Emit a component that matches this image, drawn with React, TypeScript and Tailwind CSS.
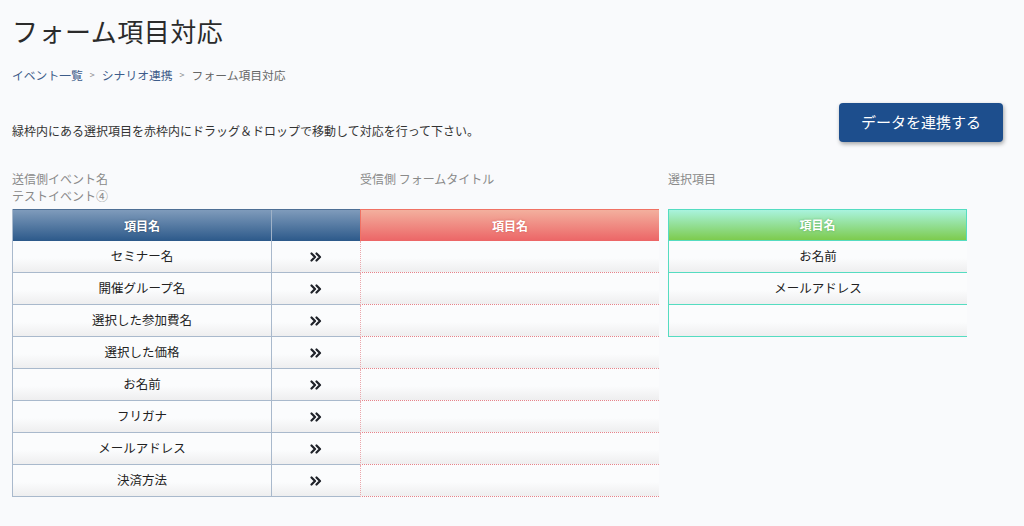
const sourceItems = [
  'セミナー名',
  '開催グループ名',
  '選択した参加費名',
  '選択した価格',
  'お名前',
  'フリガナ',
  'メールアドレス',
  '決済方法',
];

const choices = ['お名前', 'メールアドレス', ''];

const rowBg = 'bg-[linear-gradient(to_bottom,#fbfcfd_55%,#eeeeef)]';

function Chevrons() {
  return (
    <svg width="12" height="10" viewBox="0 0 12 10" fill="none" stroke="#1f2229" strokeWidth="2.2" strokeLinecap="round" strokeLinejoin="round">
      <path d="M1.5 1.5l3.5 3.5-3.5 3.5" />
      <path d="M6.5 1.5l3.5 3.5-3.5 3.5" />
    </svg>
  );
}

export default function App() {
  return (
    <div className="min-h-[526px] w-[1024px] bg-[#f9fafc] px-3 text-[#333] [font-family:'Noto_Sans_CJK_JP','Noto_Sans',sans-serif]">
      {/* Title + breadcrumb */}
      <h1 className="pt-[11px] text-[26px] leading-[40px] font-normal tracking-[0.5px] text-[#2b2b2b]">フォーム項目対応</h1>
      <nav className="mt-[16px] flex items-center text-[11.8px] leading-[16px]">
        <span className="text-[#3d5c8a]">イベント一覧</span>
        <span className="mx-[7px] text-[9px] text-[#888]">&gt;</span>
        <span className="text-[#3d5c8a]">シナリオ連携</span>
        <span className="mx-[7px] text-[9px] text-[#888]">&gt;</span>
        <span className="text-[#666]">フォーム項目対応</span>
      </nav>

      {/* Instruction + action */}
      <div className="mt-[20px] flex items-center justify-between pr-[9px]">
        <p className="mt-[16px] text-[12px] leading-[16px] text-[#333]">
          緑枠内にある選択項目を赤枠内にドラッグ＆ドロップで移動して対応を行って下さい。
        </p>
        <button className="h-[39px] w-[164px] rounded-[4px] bg-[#1d4e8d] text-[15px] text-white shadow-[1px_2px_4px_rgba(0,0,0,0.35)]">
          データを連携する
        </button>
      </div>

      {/* Tables */}
      <div className="mt-[28px] flex gap-[9px]">
        <div className="w-[647px]">
          <div className="flex text-[12px] leading-[17px] text-[#8a8a8a]">
            <div className="w-[348px]">
              <p>送信側イベント名</p>
              <p>テストイベント④</p>
            </div>
            <p>受信側 フォームタイトル</p>
          </div>
          <div className="mt-[5px] flex">
            {/* sender */}
            <div className="w-[348px] border-l border-l-[#a9b9cc]">
              <div className="flex h-[32px] border-t border-t-[#4e6f95] bg-[linear-gradient(to_bottom,#7f9bbb,#2c598a)] text-[12px] font-bold text-white [text-shadow:0_0_2px_rgba(0,0,0,0.4)]">
                <div className="flex w-[258px] items-center justify-center">項目名</div>
                <div className="flex-1 border-l border-l-[#9fb2c8]" />
              </div>
              {sourceItems.map((item) => (
                <div key={item} className={`flex h-[32px] border-b border-b-[#a9b9cc] ${rowBg}`}>
                  <div className="flex w-[258px] items-center justify-center text-[12.5px] text-[#222]">{item}</div>
                  <div className="flex flex-1 items-center justify-center border-l border-l-[#a9b9cc]">
                    <Chevrons />
                  </div>
                </div>
              ))}
            </div>
            {/* receiver */}
            <div className="w-[299px]">
              <div className="flex h-[32px] items-center justify-center border-t border-l border-t-[#f07264] border-l-[#f07264] bg-[linear-gradient(to_bottom,#f3b09e,#ec6566)] text-[12px] font-bold text-white [text-shadow:0_0_2px_rgba(180,40,40,0.5)]">
                項目名
              </div>
              {sourceItems.map((item) => (
                <div key={item} className={`h-[32px] border-b border-l border-dotted border-b-[#e6838a] border-l-[#eba6ab] ${rowBg}`} />
              ))}
            </div>
          </div>
        </div>

        {/* choices */}
        <div className="w-[299px]">
          <p className="text-[12px] leading-[17px] text-[#8a8a8a]">選択項目</p>
          <div className="mt-[22px] border-l border-l-[#55dcc1]">
            <div className="flex h-[32px] items-center justify-center border-y border-r border-t-[#55dcc1] border-b-[#55dcc1] border-r-[#55dcc1] bg-[linear-gradient(to_bottom,#a9f3de,#7dcb4d)] text-[12px] font-bold text-white [text-shadow:0_0_2px_rgba(40,120,40,0.5)]">
              項目名
            </div>
            {choices.map((c, i) => (
              <div key={i} className={`flex h-[32px] items-center justify-center border-b border-b-[#55dcc1] text-[12.5px] text-[#222] ${rowBg}`}>
                {c}
              </div>
            ))}
          </div>
        </div>
      </div>
    </div>
  );
}
